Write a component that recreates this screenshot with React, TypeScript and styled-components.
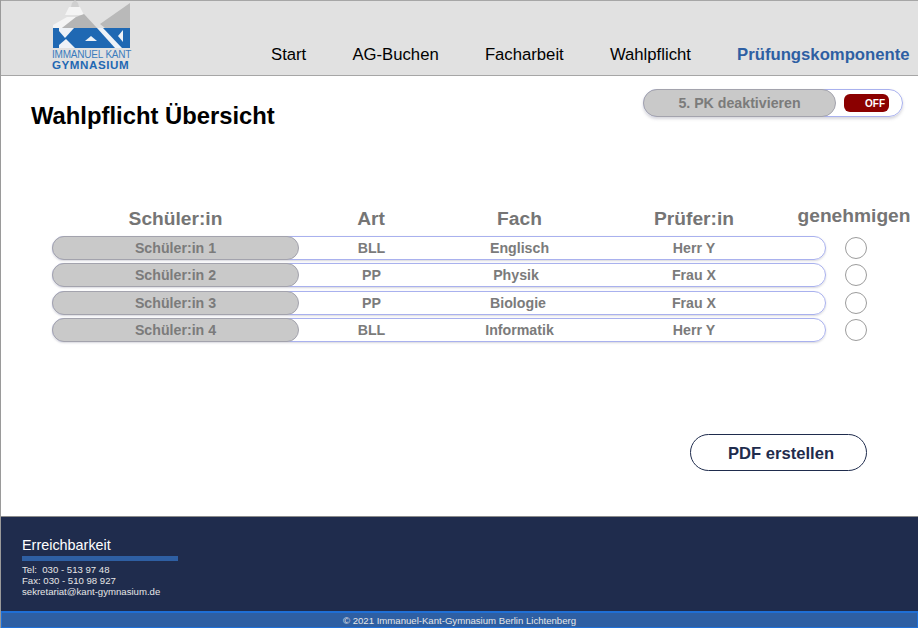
import styled, { createGlobalStyle } from "styled-components";

const GlobalStyle = createGlobalStyle`
  html, body {
    margin: 0;
    padding: 0;
    background: #fff;
  }
  * {
    box-sizing: border-box;
  }
`;

const Page = styled.div`
  width: 918px;
  height: 628px;
  display: flex;
  flex-direction: column;
  font-family: "Liberation Sans", Arial, sans-serif;
  border-left: 1px solid #9a9a9a;
  overflow: hidden;
`;

const Header = styled.header`
  height: 76px;
  flex-shrink: 0;
  display: flex;
  background: #e1e1e1;
  border-top: 1px solid #a6a6a6;
  border-bottom: 1px solid #a6a6a6;
  padding-left: 51px;
`;

const LogoBox = styled.div`
  width: 79px;
  margin-top: -1px;
  display: flex;
  flex-direction: column;
  color: #1f68b3;
  svg {
    display: block;
  }
`;

const LogoLine = styled.span`
  font-size: 10px;
  line-height: 10px;
  letter-spacing: -0.2px;
  white-space: nowrap;
  color: #3b7cbd;
`;

const LogoName = styled.span`
  font-size: 11.6px;
  line-height: 10px;
  font-weight: 700;
  letter-spacing: 0.55px;
  white-space: nowrap;
`;

const Nav = styled.nav`
  display: flex;
  align-self: flex-end;
  margin-left: 140px;
  gap: 46.2px;
  height: 29px;
`;

const NavItem = styled.a<{ $active?: boolean }>`
  font-size: 16.7px;
  line-height: 18px;
  color: ${(p) => (p.$active ? "#2e5fa3" : "#000")};
  font-weight: ${(p) => (p.$active ? 700 : 400)};
  white-space: nowrap;
`;

const Main = styled.main`
  flex: 1;
  display: flex;
  flex-direction: column;
  padding: 13px 0 0 30px;
`;

const TitleRow = styled.div`
  display: flex;
  justify-content: space-between;
  align-items: flex-start;
  padding-right: 15px;
`;

const Title = styled.h1`
  margin: 13px 0 0;
  font-size: 23.8px;
  line-height: 28px;
  font-weight: 700;
  color: #000;
`;

const ToggleBar = styled.div`
  width: 260px;
  height: 28px;
  display: flex;
  align-items: center;
  justify-content: space-between;
  padding-right: 13px;
  border: 1px solid #a9b1ee;
  border-radius: 14px;
  box-shadow: 0 2px 3px rgba(120, 120, 140, 0.3);
`;

const ToggleLabel = styled.div`
  width: 193px;
  height: 28px;
  margin-left: -1px;
  display: flex;
  align-items: center;
  justify-content: center;
  background: #c9c9c9;
  border: 1px solid #a3a3ad;
  border-radius: 14px;
  color: #7b7b7b;
  font-size: 14.2px;
  font-weight: 700;
`;

const OffSwitch = styled.div`
  width: 45px;
  height: 18px;
  display: flex;
  align-items: center;
  justify-content: flex-end;
  padding-right: 4px;
  background: #8b0000;
  border-radius: 6px;
  color: #fff;
  font-size: 10px;
  font-weight: 700;
`;

const Table = styled.section`
  margin-top: 74px;
  margin-left: 21px;
  display: flex;
  flex-direction: column;
  gap: 3.33px;
`;

const Columns = styled.div`
  display: grid;
  grid-template-columns: 247px 144px 153px 196px 124px;
  align-items: end;
  height: 26px;
  margin-bottom: 2.67px;
`;

const ColumnTitle = styled.div<{ $raised?: boolean }>`
  color: #757575;
  font-size: 19.2px;
  line-height: 22px;
  font-weight: 700;
  text-align: center;
  white-space: nowrap;
  margin-bottom: ${(p) => (p.$raised ? "3px" : "0")};
`;

const Row = styled.div`
  display: flex;
  align-items: center;
  height: 24px;
`;

const RowCard = styled.div`
  width: 774px;
  height: 100%;
  display: grid;
  grid-template-columns: 247px 143px 153px 196px 1fr;
  align-items: center;
  border: 1px solid #a9b1ee;
  border-radius: 12px;
  box-shadow: 0 1px 2px rgba(120, 120, 140, 0.3);
`;

const NameCell = styled.div`
  height: 24px;
  margin: -1px 1px -1px -1px;
  display: flex;
  align-items: center;
  justify-content: center;
  background: #c9c9c9;
  border: 1px solid #a3a3ad;
  border-radius: 12px;
  color: #7b7b7b;
  font-size: 14.2px;
  font-weight: 700;
`;

const Cell = styled.div<{ $inset?: number }>`
  color: #7b7b7b;
  font-size: 14.2px;
  font-weight: 700;
  text-align: center;
  padding-right: ${(p) => p.$inset ?? 0}px;
`;

const Approve = styled.span`
  width: 22px;
  height: 22px;
  margin-left: 19px;
  border: 1px solid #9c9c9c;
  border-radius: 50%;
  background: #fff;
`;

const Actions = styled.div`
  margin-top: 92px;
  margin-left: 659px;
`;

const PdfButton = styled.button`
  width: 177px;
  height: 37px;
  padding: 3px 0 0 5px;
  background: #fff;
  border: 1.5px solid #1f2c4d;
  border-radius: 19px;
  color: #1f2c4d;
  font-family: inherit;
  font-size: 16.6px;
  font-weight: 700;
`;

const Footer = styled.footer`
  height: 112px;
  flex-shrink: 0;
  display: flex;
  flex-direction: column;
  background: #1f2c4d;
  border-top: 1px solid #8c8c8c;
`;

const Contact = styled.div`
  flex: 1;
  padding: 20px 0 0 21px;
  color: #e6e6e6;
`;

const ContactTitle = styled.div`
  font-size: 14.4px;
  line-height: 17px;
  color: #fff;
`;

const Underline = styled.div`
  width: 156px;
  height: 5px;
  margin: 2px 0 3px;
  background: #2e5fa3;
`;

const ContactLine = styled.div`
  font-size: 9.6px;
  line-height: 11px;
  white-space: pre;
`;

const Copyright = styled.div`
  height: 17px;
  display: flex;
  align-items: center;
  justify-content: center;
  background: #2e5fa3;
  border: 1px solid #1f6fd6;
  border-top-width: 2px;
  color: #e6e6e6;
  font-size: 9.6px;
`;

const LogoMark = () => (
  <svg width="79" height="50" viewBox="52 0 79 50">
    {/* church and roofs */}
    <path d="M71 7 L72 3 L75 0 L78 3 L79 7 Z" fill="#d0d0d0" />
    <path d="M69 7 H80 L84 15 H65 Z" fill="#f4f4f4" />
    <path d="M53 28 V25 L67 17 H76 L62 28 Z" fill="#f4f4f4" />
    <path d="M62 28 L76 17 L84 14 L97 28 Z" fill="#b5b5b5" />
    <path d="M100 24 L130 3 V28 H105 Z" fill="#b9b9b9" />
    {/* KAK block */}
    <path d="M53 28 H130 V48 H53 Z" fill="#1f68b3" />
    <path d="M59 28 H74 L65 38 L59 31 Z" fill="#eef2f7" />
    <path d="M59 48 H75 L66 39 L59 45 Z" fill="#eef2f7" />
    <path d="M85 41 L91 36 L97 41 Z" fill="#eef2f7" />
    <path d="M97 28 H103 L122 48 H115 Z" fill="#eef2f7" />
    <path d="M118 36 L123 30 V42 Z" fill="#eef2f7" />
  </svg>
);

const rows = [
  { name: "Schüler:in 1", art: "BLL", fach: "Englisch", fachInset: 0, pruefer: "Herr Y" },
  { name: "Schüler:in 2", art: "PP", fach: "Physik", fachInset: 7, pruefer: "Frau X" },
  { name: "Schüler:in 3", art: "PP", fach: "Biologie", fachInset: 3, pruefer: "Frau X" },
  { name: "Schüler:in 4", art: "BLL", fach: "Informatik", fachInset: 0, pruefer: "Herr Y" },
];

const App = () => {
  return (
    <Page>
      <GlobalStyle />
      <Header>
        <LogoBox>
          <LogoMark />
          <LogoLine>IMMANUEL KANT</LogoLine>
          <LogoName>GYMNASIUM</LogoName>
        </LogoBox>
        <Nav>
          <NavItem>Start</NavItem>
          <NavItem>AG-Buchen</NavItem>
          <NavItem>Facharbeit</NavItem>
          <NavItem>Wahlpflicht</NavItem>
          <NavItem $active>Prüfungskomponente</NavItem>
        </Nav>
      </Header>
      <Main>
        <TitleRow>
          <Title>Wahlpflicht Übersicht</Title>
          <ToggleBar>
            <ToggleLabel>5. PK deaktivieren</ToggleLabel>
            <OffSwitch>OFF</OffSwitch>
          </ToggleBar>
        </TitleRow>
        <Table>
          <Columns>
            <ColumnTitle>Schüler:in</ColumnTitle>
            <ColumnTitle>Art</ColumnTitle>
            <ColumnTitle>Fach</ColumnTitle>
            <ColumnTitle>Prüfer:in</ColumnTitle>
            <ColumnTitle $raised>genehmigen</ColumnTitle>
          </Columns>
          {rows.map((row) => (
            <Row key={row.name}>
              <RowCard>
                <NameCell>{row.name}</NameCell>
                <Cell>{row.art}</Cell>
                <Cell $inset={row.fachInset}>{row.fach}</Cell>
                <Cell>{row.pruefer}</Cell>
              </RowCard>
              <Approve />
            </Row>
          ))}
        </Table>
        <Actions>
          <PdfButton>PDF erstellen</PdfButton>
        </Actions>
      </Main>
      <Footer>
        <Contact>
          <ContactTitle>Erreichbarkeit</ContactTitle>
          <Underline />
          <ContactLine>{"Tel:  030 - 513 97 48"}</ContactLine>
          <ContactLine>Fax: 030 - 510 98 927</ContactLine>
          <ContactLine>sekretariat@kant-gymnasium.de</ContactLine>
        </Contact>
        <Copyright>© 2021 Immanuel-Kant-Gymnasium Berlin Lichtenberg</Copyright>
      </Footer>
    </Page>
  );
};

export default App;
